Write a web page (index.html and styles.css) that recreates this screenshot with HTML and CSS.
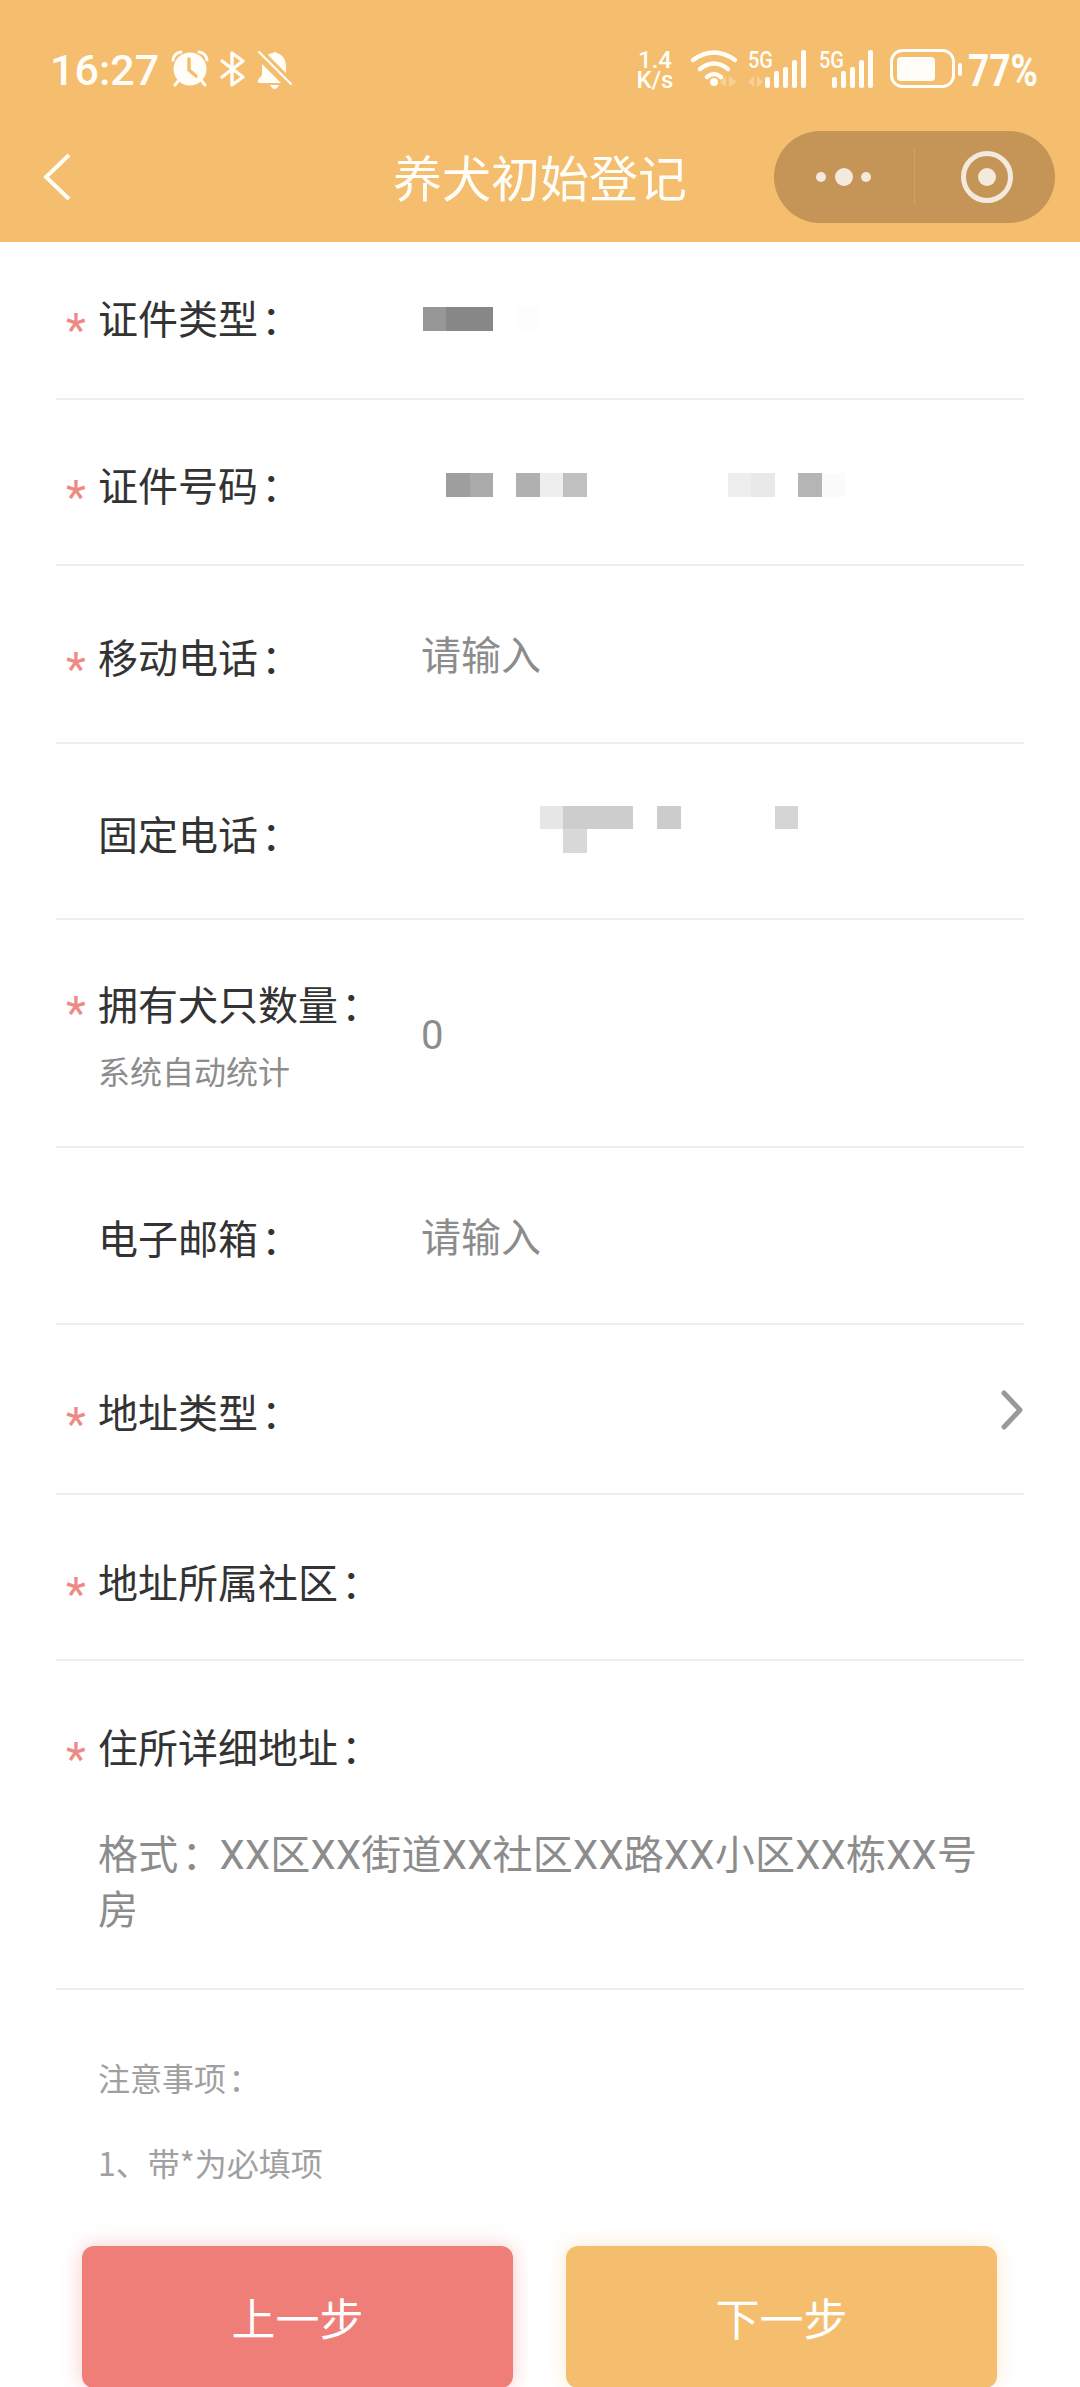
FILE: index.html
```html
<!DOCTYPE html>
<html lang="zh-CN">
<head>
    <meta charset="UTF-8">
    <meta name="viewport" content="width=device-width, initial-scale=1.0">
    <title>养犬初始登记</title>
    <link rel="stylesheet" href="styles.css">
</head>
<body>
    <header class="top">
        <div class="status">
            <span class="time">16:27</span>
            <svg class="ic-alarm" width="38" height="38" viewBox="0 0 38 38">
                <path d="M2 10 Q3 3 10 2 M36 10 Q35 3 28 2" fill="none" stroke="#fffdf8" stroke-width="3" stroke-linecap="round"/>
                <path d="M8 30 L4 35 M30 30 L34 35" stroke="#fffdf8" stroke-width="3" stroke-linecap="round"/>
                <circle cx="19" cy="19" r="16.5" fill="#fffdf8"/>
                <path d="M18 9 V20 L25 26" fill="none" stroke="#f4be6e" stroke-width="3.5" stroke-linecap="round" stroke-linejoin="round"/>
            </svg>
            <svg class="ic-bt" width="26" height="38" viewBox="0 0 26 38">
                <path d="M2 11 L23 27 L12 35 V3 L23 11 L2 27" fill="none" stroke="#fffdf8" stroke-width="3.4" stroke-linejoin="round" stroke-linecap="round"/>
            </svg>
            <svg class="ic-bell" width="36" height="40" viewBox="0 0 36 40">
                <path d="M16 3 A2.5 2.5 0 0 1 20 3 C27 5 29 11 29 17 V23 L11 5 Q13 3 16 3 Z" fill="#fffdf8"/>
                <path d="M5 14 L24 33 H2 Q0 32 1 30 L5 25 Z" fill="#fffdf8"/>
                <path d="M13 35 H22 Q20 39 17.500 39 Q15 39 13 35 Z" fill="#fffdf8"/>
                <path d="M2 2 L34 34" stroke="#fffdf8" stroke-width="2.200" stroke-linecap="round"/>
            </svg>

            <div class="status-right">
                <div class="speed"><span>1.4</span><span>K/s</span></div>
                <svg class="ic-wifi" width="48" height="40" viewBox="0 0 48 40">
                    <path d="M2 11 Q23 -4 44 11 M9 20 Q23 9 37 20 M16 28 Q23 22 30 28" fill="none" stroke="#fffdf8" stroke-width="4.500" stroke-linecap="round"/>
                    <circle cx="23" cy="33" r="4" fill="#fffdf8"/>
                    <path d="M35 27 V38 L29 33 Z M38 27 V38 L46 33 Z" fill="#fffdf8" opacity=".3"/>
                </svg>
                <svg class="ic-sim1" width="60" height="40" viewBox="0 0 60 40">
                    <text x="0" y="19" font-family="Roboto" font-weight="500" font-size="24" fill="#fffdf8" textLength="25" lengthAdjust="spacingAndGlyphs">5G</text>
                    <path d="M6 27 V38 L0 33 Z M9 27 V38 L15 33 Z" fill="#fffdf8" opacity=".3"/>
                    <rect x="17" y="28" width="5" height="11" rx="2" fill="#fffdf8"/>
                    <rect x="26" y="22" width="5" height="17" rx="2" fill="#fffdf8"/>
                    <rect x="35" y="18" width="5" height="21" rx="2" fill="#fffdf8"/>
                    <rect x="44" y="11" width="5" height="28" rx="2" fill="#fffdf8"/>
                    <rect x="53" y="1" width="5" height="38" rx="2" fill="#fffdf8"/>
                </svg>
                <svg class="ic-sim2" width="55" height="40" viewBox="0 0 55 40">
                    <text x="0" y="19" font-family="Roboto" font-weight="500" font-size="24" fill="#fffdf8" textLength="25" lengthAdjust="spacingAndGlyphs">5G</text>
                    <rect x="13" y="28" width="5" height="11" rx="2" fill="#fffdf8"/>
                    <rect x="22" y="22" width="5" height="17" rx="2" fill="#fffdf8"/>
                    <rect x="31" y="18" width="5" height="21" rx="2" fill="#fffdf8"/>
                    <rect x="40" y="11" width="5" height="28" rx="2" fill="#fffdf8"/>
                    <rect x="49" y="1" width="5" height="38" rx="2" fill="#fffdf8"/>
                </svg>
                <svg class="ic-batt" width="73" height="40" viewBox="0 0 73 40">
                    <rect x="1.500" y="1.500" width="62" height="36" rx="11" fill="none" stroke="#fffdf8" stroke-width="3"/>
                    <rect x="7" y="8" width="38" height="24" rx="4" fill="#fffdf8"/>
                    <rect x="68" y="14" width="4" height="13" rx="2" fill="#fffdf8"/>
                </svg>
                <svg class="ic-pct" width="70" height="40" viewBox="0 0 70 40">
                    <text x="0" y="37" font-family="Roboto" font-weight="700" font-size="45" fill="#fffdf8" textLength="70" lengthAdjust="spacingAndGlyphs">77%</text>
                </svg>
            </div>
        </div>

        <div class="nav">
            <svg class="back" width="30" height="50" viewBox="0 0 30 50">
                <path d="M26 3 L3 25 L26 47" fill="none" stroke="#fffdf8" stroke-width="4"/>
            </svg>
            <h1>养犬初始登记</h1>
            <div class="capsule">
                <div class="cap-left">
                    <svg width="56" height="20" viewBox="0 0 56 20">
                        <circle cx="5" cy="10" r="5" fill="#f3e9dd"/>
                        <circle cx="28" cy="10" r="9" fill="#f3e9dd"/>
                        <circle cx="50" cy="10" r="5" fill="#f3e9dd"/>
                    </svg>
                </div>
                <div class="cap-right">
                    <svg width="54" height="54" viewBox="0 0 54 54">
                        <circle cx="27" cy="27" r="23.500" fill="none" stroke="#f3e9dd" stroke-width="5"/>
                        <circle cx="27" cy="27" r="9" fill="#f3e9dd"/>
                    </svg>
                </div>
            </div>
        </div>
    </header>

    <div class="form">
        <div class="row r-type">
            <span class="star">*</span>
            <div class="label">证件类型<span class="colon">：</span></div>
            <svg class="mosaic" width="120" height="24" viewBox="0 0 120 24">
                <rect x="1" width="23" height="24" fill="#979797"/>
                <rect x="24" width="47" height="24" fill="#878787"/>
                <rect x="95" width="23" height="24" fill="#fdfdfd"/>
            </svg>
        </div>
        <div class="row r-no">
            <span class="star">*</span>
            <div class="label">证件号码<span class="colon">：</span></div>
            <svg class="mosaic" width="430" height="24" viewBox="0 0 430 24">
                <rect x="24" width="24" height="24" fill="#9e9e9e"/>
                <rect x="48" width="23" height="24" fill="#aaaaaa"/>
                <rect x="94" width="24" height="24" fill="#b0b0b0"/>
                <rect x="118" width="23" height="24" fill="#eeeeee"/>
                <rect x="141" width="24" height="24" fill="#c0c0c0"/>
                <rect x="306" width="23" height="24" fill="#eeeeee"/>
                <rect x="329" width="24" height="24" fill="#e9e9e9"/>
                <rect x="376" width="24" height="24" fill="#b5b5b5"/>
                <rect x="400" width="23" height="24" fill="#fbfbfb"/>
            </svg>
        </div>
        <div class="row r-mobile">
            <span class="star">*</span>
            <div class="label">移动电话<span class="colon">：</span></div>
            <div class="value">请输入</div>
        </div>
        <div class="row r-phone">
            <span class="star"></span>
            <div class="label">固定电话<span class="colon">：</span></div>
            <svg class="mosaic" width="380" height="47" viewBox="0 0 380 47">
                <rect x="118" width="23" height="23" fill="#e6e6e6"/>
                <rect x="141" width="70" height="23" fill="#cdcdcd"/>
                <rect x="141" y="23" width="24" height="24" fill="#d8d8d8"/>
                <rect x="235" width="24" height="23" fill="#cccccc"/>
                <rect x="353" width="23" height="23" fill="#d5d5d5"/>
            </svg>
        </div>
        <div class="row r-count">
            <span class="star">*</span>
            <div class="label">
                拥有犬只数量<span class="colon">：</span>
                <div class="sub">系统自动统计</div>
            </div>
            <div class="value">0</div>
        </div>
        <div class="row r-mail">
            <span class="star"></span>
            <div class="label">电子邮箱<span class="colon">：</span></div>
            <div class="value">请输入</div>
        </div>
        <div class="row r-addrtype">
            <span class="star">*</span>
            <div class="label">地址类型<span class="colon">：</span></div>
            <svg class="arrow" width="24" height="40" viewBox="0 0 24 40">
                <path d="M4 3 L20 20 L4 37" fill="none" stroke="#999" stroke-width="5" stroke-linecap="round" stroke-linejoin="round"/>
            </svg>
        </div>
        <div class="row r-community">
            <span class="star">*</span>
            <div class="label">地址所属社区<span class="colon">：</span></div>
        </div>
        <div class="row-block">
            <div class="block-head">
                <span class="star">*</span>
                <div class="label">住所详细地址<span class="colon">：</span></div>
            </div>
            <div class="area">格式<span class="colon">：</span>XX区XX街道XX社区XX路XX小区XX栋XX号房</div>
        </div>
    </div>

    <div class="notes">
        <p>注意事项<span class="colon">：</span></p>
        <p>1、带*为必填项</p>
    </div>

    <div class="btns">
        <div class="btn btn-prev">上一步</div>
        <div class="btn btn-next">下一步</div>
    </div>
</body>
</html>
```
FILE: styles.css
```css
html, body {
    margin: 0;
    padding: 0;
}
body {
    width: 1080px;
    height: 2387px;
    overflow: hidden;
    background: #fff;
    font-family: "Noto Sans CJK SC", "Noto Sans", sans-serif;
    color: #333;
}
svg {
    display: block;
    flex-shrink: 0;
    overflow: visible;
}

/* top bar */
.top {
    height: 242px;
    background: #f4be6e;
    color: #fffdf8;
}
.status {
    height: 112px;
    box-sizing: border-box;
    padding: 50px 42px 0 50px;
    display: flex;
    align-items: flex-start;
}
.time {
    font-family: Roboto, sans-serif;
    font-weight: 500;
    font-size: 43px;
    line-height: 40px;
    width: 107px;
    white-space: nowrap;
}
.ic-alarm {
    margin-left: 14px;
}
.ic-bt {
    margin-left: 11px;
}
.ic-bell {
    margin-left: 11px;
}
.status-right {
    margin-left: auto;
    margin-top: -1px;
    display: flex;
    align-items: flex-start;
}
.speed {
    width: 38px;
    margin-top: 1px;
    display: flex;
    flex-direction: column;
    align-items: center;
    font-family: Roboto, sans-serif;
    font-weight: 500;
    font-size: 24px;
    line-height: 20px;
}
.ic-wifi {
    margin-left: 17px;
}
.ic-sim1 {
    margin-left: 9px;
}
.ic-sim2 {
    margin-left: 11px;
}
.ic-batt {
    margin-left: 16px;
}
.ic-pct {
    margin-left: 5px;
}
.nav {
    height: 130px;
    display: grid;
    grid-template-columns: 1fr auto 1fr;
    align-items: center;
}
.nav h1 {
    margin: -3px 0 0;
    font-size: 49px;
    font-weight: 400;
    line-height: 60px;
}
.back {
    margin-left: 43px;
}
.capsule {
    justify-self: end;
    margin-right: 25px;
    width: 281px;
    height: 92px;
    border-radius: 46px;
    background: #c49556;
    display: flex;
    align-items: center;
}
.cap-left {
    width: 140px;
    height: 56px;
    display: flex;
    align-items: center;
    justify-content: center;
    border-right: 1px solid #cfa264;
}
.cap-right {
    flex: 1;
    display: flex;
    justify-content: center;
    padding-left: 4px;
}

/* form rows */
.form {
    margin: 0 56px;
}
.row {
    box-sizing: border-box;
    display: flex;
    align-items: center;
    border-bottom: 2px solid #eeeeee;
}
.r-type { height: 158px; padding-bottom: 7px; }
.r-no { height: 166px; padding-top: 4px; }
.r-mobile { height: 178px; padding-top: 3px; }
.r-phone { height: 176px; padding-top: 3px; }
.r-count { height: 228px; }
.r-mail { height: 177px; padding-top: 3px; }
.r-addrtype { height: 170px; padding-top: 4px; }
.r-community { height: 166px; padding-top: 8px; }

.star {
    width: 42px;
    flex-shrink: 0;
    box-sizing: border-box;
    padding-left: 10px;
    color: #ee8a86;
    font-family: Roboto, sans-serif;
    font-size: 46px;
    line-height: 40px;
    height: 40px;
    position: relative;
    top: 13px;
}
.label {
    width: 323px;
    flex-shrink: 0;
    font-size: 40px;
    line-height: 56px;
    white-space: nowrap;
}
.colon {
    font-family: "Noto Sans CJK TC", sans-serif;
    font-feature-settings: "palt";
    margin-left: .08em;
}
.value {
    margin-top: 3px;
    font-family: Roboto, "Noto Sans CJK SC", sans-serif;
    font-size: 40px;
    line-height: 56px;
    color: #8c8c8c;
}
.sub {
    font-size: 32px;
    line-height: 46px;
    margin-top: 16px;
    color: #8c8c8c;
}
.r-count .star {
    align-self: flex-start;
    margin-top: 73px;
    top: 0;
}
.r-count .label {
    margin-top: 1px;
}
.r-count .value {
    margin-top: 6px;
}
.arrow {
    margin-left: auto;
    margin-top: -3px;
}
.mosaic {
    margin-left: 1px;
}
.r-type .mosaic {
    margin-top: 5px;
}
.r-no .mosaic {
    margin-top: 2px;
}
.r-phone .mosaic {
    margin-top: -6px;
}
.row-block {
    box-sizing: border-box;
    height: 329px;
    border-bottom: 2px solid #eeeeee;
}
.block-head {
    display: flex;
    align-items: center;
    padding-top: 57px;
}
.area {
    margin: 51px 26px 0 42px;
    font-family: Roboto, "Noto Sans CJK SC", sans-serif;
    font-size: 40px;
    line-height: 55px;
    letter-spacing: .27px;
    color: #8c8c8c;
}
.area .colon {
    margin-right: .44em;
}

/* notes and buttons */
.notes {
    height: 256px;
    box-sizing: border-box;
    padding: 64px 0 0 98px;
    font-size: 32px;
    color: #a0a0a0;
}
.notes p {
    margin: 0 0 39px;
    line-height: 46px;
}
.btns {
    display: flex;
    gap: 53px;
    padding-left: 82px;
}
.btn {
    width: 431px;
    height: 142px;
    border-radius: 12px;
    display: flex;
    align-items: center;
    justify-content: center;
    color: #fff;
    font-size: 44px;
}
.btn-prev {
    background: #ef7e78;
    box-shadow: 0 0 20px rgba(239, 126, 120, .4);
}
.btn-next {
    background: #f4be6e;
    box-shadow: 0 0 20px rgba(244, 190, 110, .35);
}
```
